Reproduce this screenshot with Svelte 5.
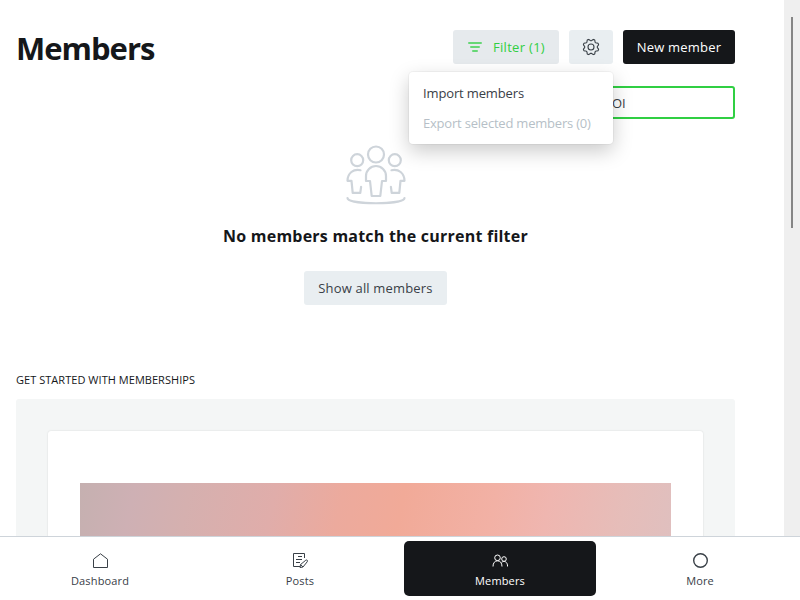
<script>
  const tabs = [
    { label: 'Dashboard', icon: 'home' },
    { label: 'Posts', icon: 'posts' },
    { label: 'Members', icon: 'members' },
    { label: 'More', icon: 'more' }
  ];
  const active = 'Members';
  const gear = Array.from({ length: 64 }, (_, i) => {
    const a = (i / 64) * Math.PI * 2;
    const r = 7.15 + 0.85 * Math.tanh(2.2 * Math.cos(8 * a));
    return `${(9 + r * Math.cos(a + Math.PI / 8)).toFixed(2)},${(9 + r * Math.sin(a + Math.PI / 8)).toFixed(2)}`;
  }).join(' ');
</script>

<div class="app">
  <div class="viewport">
    <main>
      <header>
        <h1>Members</h1>
        <div class="tools">
          <div class="actions">
            <button class="btn filter">
              <svg width="16" height="10" viewBox="0 0 16 10" fill="none" stroke="currentColor" stroke-width="2" stroke-linecap="round"><path d="M2 1h12M4 5h8M6 9h4" /></svg>
              <span>Filter (1)</span>
            </button>
            <div class="settings">
              <button class="btn cog" aria-label="Settings">
                <svg width="18" height="18" viewBox="0 0 18 18" fill="none" stroke="currentColor" stroke-width="1.1"><polygon points={gear} stroke-linejoin="round" /><circle cx="9" cy="9" r="3" /></svg>
              </button>
              <div class="menu">
                <div class="item">Import members</div>
                <div class="item disabled">Export selected members (0)</div>
              </div>
            </div>
            <button class="btn dark">New member</button>
          </div>
          <div class="search"><span>OI</span></div>
        </div>
      </header>

      <section class="empty">
        <svg width="60" height="60" viewBox="0 0 60 60" fill="none" stroke="#ced4da" stroke-width="2.2" stroke-linecap="round" stroke-linejoin="round">
          <circle cx="30" cy="9.5" r="8" />
          <circle cx="11.2" cy="15.2" r="6" />
          <circle cx="48.8" cy="15.2" r="6" />
          <path d="M20 36v-5a10 10 0 0 1 20 0v5h-4l-1.7 15h-8.6L24 36Z" />
          <path d="M14.5 25.2c-7-1.7-13 3-13 10.6h4l1.2 12h7.6l.8-6" />
          <path d="M45.5 25.2c7-1.7 13 3 13 10.6h-4l-1.2 12h-7.6l-.8-6" />
          <path d="M1.5 53c0 7 57 7 57 0" />
        </svg>
        <h2>No members match the current filter</h2>
        <button class="btn show">Show all members</button>
      </section>

      <section class="started">
        <h3>GET STARTED WITH MEMBERSHIPS</h3>
        <div class="panel"><div class="card"><div class="art"></div></div></div>
      </section>
    </main>
    <aside><div class="thumb"></div></aside>
  </div>

  <nav>
    {#each tabs as tab}
      <a class:active={tab.label === active} href="#{tab.icon}">
        <svg width="16" height="16" viewBox="0 0 16 16" fill="none" stroke="currentColor" stroke-width="1">
          {#if tab.icon === 'home'}
            <path d="M1.5 14.5V6.2L8.5 .8l7 5.4v8.3Z" stroke-linejoin="round" />
          {:else if tab.icon === 'posts'}
            <path d="M8 13.5H1.5V.5h11V5M6 3.5h4M4 6.5h6M4 9.5h4" />
            <path d="m8 14.5.6-3 5.2-4.3c1.3-.8 2.2.5 1.4 1.6L11 14Zm.6-3L11 14" />
          {:else if tab.icon === 'members'}
            <circle cx="5.5" cy="4.8" r="2.8" /><circle cx="12" cy="6" r="2.3" />
            <path d="M1 13.5c0-3.5 1.8-5.7 4.5-5.7S10 10 10 13.5M9.6 9.3c2.8-2 6-.5 6 4.2" />
          {:else}
            <circle cx="8.5" cy="7.5" r="6.8" stroke-width="1.4" />
          {/if}
        </svg>
        <span>{tab.label}</span>
      </a>
    {/each}
  </nav>
</div>

<style>
  :global(body) { margin: 0; }
  * { box-sizing: border-box; }
  .app { width: 800px; height: 600px; overflow: hidden; display: flex; flex-direction: column; background: #fff; color: #15171a; font: 13px/18px "Open Sans", "Noto Sans", sans-serif; letter-spacing: 0; }
  h1, h2, h3 { margin: 0; }
  .viewport { display: flex; height: 536px; overflow: hidden; }
  main { width: 784px; padding: 30px 49px 0 16px; }
  aside { width: 16px; background: #efefef; padding: 17px 7px 0; }
  .thumb { width: 2px; height: 211px; background: #858585; }
  header { display: flex; justify-content: space-between; height: 89px; }
  h1 { font-size: 31px; line-height: 36px; font-weight: 700; letter-spacing: -1px; white-space: nowrap; }
  .tools { width: 326px; display: flex; flex-direction: column; gap: 22px; }
  .actions { display: flex; justify-content: flex-end; gap: 10px; }
  .btn { height: 34px; border: 0; border-radius: 3px; background: #e9eef1; color: #394047; font: inherit; letter-spacing: .3px; padding: 0; display: flex; align-items: center; justify-content: center; white-space: nowrap; }
  .filter { width: 106px; color: #30cf43; background: #e6eaed; gap: 10px; }
  .filter svg { opacity: .7; }
  .settings { position: relative; }
  .cog { width: 44px; }
  .dark { width: 112px; background: #15171a; color: #fff; letter-spacing: .2px; }
  .search { height: 33px; border: 2px solid #30cf43; border-radius: 3px; padding: 6px 0 0 201px; color: #394047; }
  .menu { position: absolute; z-index: 2; top: 42px; right: 0; width: 204px; height: 72px; padding: 6px 0; background: #fff; border-radius: 4px; box-shadow: 0 0 0 1px #00000009, 0 7px 20px #00000036; }
  .item { height: 30px; padding: 6px 14px; color: #394047; white-space: nowrap; letter-spacing: -.14px; }
  .item.disabled { color: #b6bfc7; letter-spacing: -.21px; }
  .empty { display: flex; flex-direction: column; align-items: center; height: 254px; padding-top: 26px; }
  .empty h2 { font-size: 16px; line-height: 24px; letter-spacing: .22px; margin: 19px 0 23px; white-space: nowrap; }
  .show { width: 143px; letter-spacing: .17px; }
  h3 { font-size: 11px; line-height: 14px; font-weight: 400; letter-spacing: .04px; margin-bottom: 12px; white-space: nowrap; }
  .panel { height: 220px; background: #f4f6f6; border-radius: 3px; padding: 32px; }
  .card { height: 220px; background: #fff; border-radius: 3px; box-shadow: 0 0 2px #0002; padding: 52px 32px; }
  .art { height: 116px; background: linear-gradient(102deg, #c5b0b0 0%, #ceb0b4 9%, #d5b0af 18%, #e0adaa 32%, #ecaa9d 43%, #f1aa98 53%, #f2b1a5 68%, #efb6b0 77%, #e6bdb9 89%, #dec0c0 100%); }
  nav { height: 64px; border-top: 1px solid #ced4da; display: flex; padding: 4px; gap: 8px; }
  nav a { flex: 1; height: 55px; border-radius: 5px; display: flex; flex-direction: column; align-items: center; gap: 4px; padding-top: 12px; color: #394047; text-decoration: none; font-size: 11px; line-height: 15px; letter-spacing: .14px; }
  nav a.active { background: #15171a; color: #fff; }
</style>
